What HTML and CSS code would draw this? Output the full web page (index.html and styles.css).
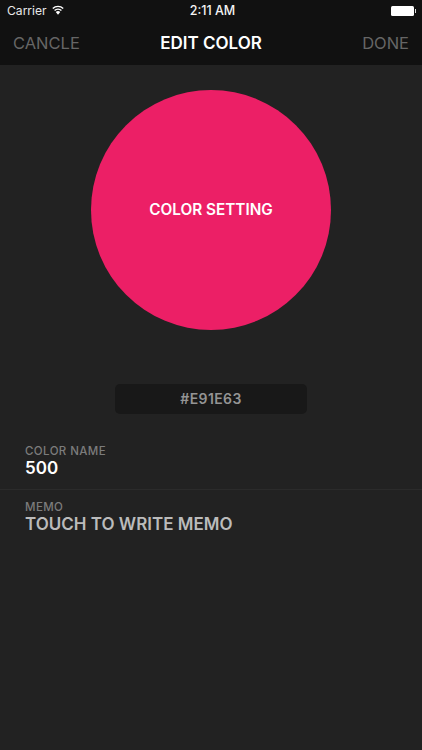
FILE: index.html
```
<!DOCTYPE html>
<html lang="en">
<head>
<meta charset="utf-8">
<title>Edit Color</title>
<link rel="stylesheet" href="styles.css">
</head>
<body>
<div class="app">
  <header class="top">
    <div class="status">
      <div class="status-left">
        <span>Carrier</span>
        <svg class="wifi" viewBox="0 0 14 11" width="12" height="10"><path d="M7 11 4.4 7.9a3.6 3.6 0 0 1 5.2 0Z" fill="#fff"/><path d="M3 6.2a5.7 5.7 0 0 1 8 0" fill="none" stroke="#fff" stroke-width="1.6"/><path d="M.9 3.8a8.7 8.7 0 0 1 12.2 0" fill="none" stroke="#fff" stroke-width="1.6"/></svg>
      </div>
      <div class="status-time">2:11 AM</div>
      <div class="status-right">
        <span class="battery"></span><span class="battery-tip"></span>
      </div>
    </div>
    <nav class="nav">
      <span class="nav-btn">CANCLE</span>
      <span class="nav-title">EDIT COLOR</span>
      <span class="nav-btn nav-btn-end">DONE</span>
    </nav>
  </header>
  <main class="content">
    <div class="swatch"><span>COLOR SETTING</span></div>
    <div class="hex">#E91E63</div>
    <section class="field field-name">
      <div class="label">COLOR NAME</div>
      <div class="value">500</div>
    </section>
    <section class="field field-memo">
      <div class="label">MEMO</div>
      <div class="value muted">TOUCH TO WRITE MEMO</div>
    </section>
  </main>
</div>
</body>
</html>
```
FILE: styles.css
```
* { box-sizing: border-box; }
html, body { margin: 0; padding: 0; }
body { width: 422px; height: 750px; overflow: hidden; background: #222222; font-family: Inter, "Liberation Sans", sans-serif; color: #fff; }
.app { display: flex; flex-direction: column; height: 750px; }
.top { height: 65px; background: #111111; flex: none; }
.status { height: 21px; display: grid; grid-template-columns: 1fr auto 1fr; align-items: center; padding: 0 6px 0 7px; font-size: 12.1px; color: #e8e8e8; }
.status-left { display: flex; align-items: center; gap: 5px; }
.wifi { display: block; margin-top: -2px; }
.status-time { font-weight: 500; font-size: 12.5px; margin-left: 2px; color: #f4f4f4; }
.status-right { display: flex; justify-content: flex-end; align-items: center; }
.battery { width: 23px; height: 10px; background: #fff; border-radius: 1.5px; }
.battery-tip { width: 1.5px; height: 4px; background: #ddd; margin-left: 1px; }
.nav { height: 44px; display: grid; grid-template-columns: 1fr auto 1fr; align-items: center; padding: 0 13px; }
.nav-btn { font-size: 16.5px; color: #666; font-weight: 400; }
.nav-btn-end { text-align: right; }
.nav-title { font-size: 17px; font-weight: 600; color: #fff; padding-bottom: 1px; }
.content { flex: 1; display: flex; flex-direction: column; }
.swatch { width: 240px; height: 240px; margin: 25px auto 0; border-radius: 50%; background: #ec1f66; display: flex; align-items: center; justify-content: center; font-size: 15.3px; font-weight: 600; padding-bottom: 2px; }
.hex { width: 192px; height: 30px; margin: 54px auto 0; background: #181818; border-radius: 5px; display: flex; align-items: center; justify-content: center; font-size: 14px; font-weight: 600; color: #949494; letter-spacing: 0.4px; padding-bottom: 2px; }
.field { padding-left: 25px; }
.field-name { margin-top: 30px; height: 46px; border-bottom: 1px solid #2b2b2b; }
.field-memo { padding-top: 10px; }
.label { font-size: 11.5px; line-height: 14px; font-weight: 500; color: #7c7c7c; letter-spacing: 0.4px; }
.value { font-size: 17px; line-height: 20px; font-weight: 600; color: #fff; }
.value.muted { color: #bbb; }
```
